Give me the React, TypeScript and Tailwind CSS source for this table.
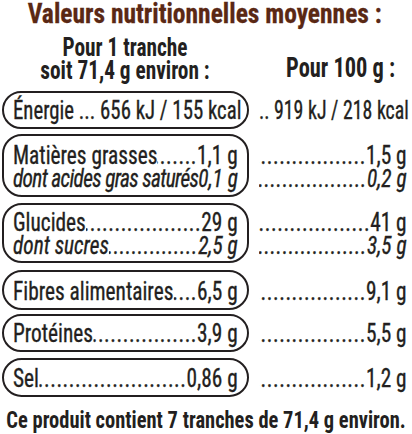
const dots = ".".repeat(60);

function Leader({
  label,
  value,
  italic,
  labelClass = "",
}: {
  label: string;
  value: string;
  italic?: boolean;
  labelClass?: string;
}) {
  return (
    <div className={`flex items-baseline whitespace-nowrap ${italic ? "italic" : ""}`}>
      <span className={`shrink-0 ${labelClass}`}>{label}</span>
      <span className="flex min-w-0 flex-1 justify-end overflow-hidden tracking-[0.7px]">
        <span className="shrink-0">{dots}</span>
      </span>
      <span className="shrink-0">{value}</span>
    </div>
  );
}

function Row({
  h,
  lh,
  pt,
  mt,
  left,
  right,
  leftScale = "w-[274px] scale-x-[0.82]",
  rightScale = "w-[180px] scale-x-[0.82]",
}: {
  h: string;
  lh: string;
  pt: string;
  mt: string;
  left: React.ReactNode;
  right: React.ReactNode;
  leftScale?: string;
  rightScale?: string;
}) {
  return (
    <div className={`grid grid-cols-[247px_153px] gap-[10px] ${h} ${mt} ${lh}`}>
      <div className={`flex flex-col justify-center rounded-[20px] border-[2.5px] border-[#231f20] pl-[8.5px] ${pt}`}>
        <div className={`origin-left ${leftScale}`}>{left}</div>
      </div>
      <div className={`flex flex-col justify-center ${pt}`}>
        <div className={`origin-left ${rightScale}`}>{right}</div>
      </div>
    </div>
  );
}

export default function App() {
  return (
    <div className="h-[434px] w-[412px] overflow-hidden bg-white pl-[2px] font-['Roboto_Condensed',sans-serif] text-[#231f20]">
      <div className="-ml-[2px] w-[450px] origin-left scale-x-[0.91] text-center text-[28px] font-bold leading-[28px] text-[#5a2814] [-webkit-text-stroke:0.3px_#5a2814]">
        Valeurs nutritionnelles moyennes :
      </div>
      <div className="mt-[7.5px] grid grid-cols-[247px_153px] gap-[10px] font-bold">
        <div className="w-[300px] origin-left scale-x-[0.82] text-center text-[26px] leading-[23.5px]">
          <div>Pour 1 tranche</div>
          <div>soit 71,4 g environ :</div>
        </div>
        <div className="pt-[17px] pl-[10px]">
          <div className="w-[179px] origin-left scale-x-[0.8] text-center text-[28px] leading-[30px]">Pour 100 g :</div>
        </div>
      </div>
      <div className="mt-[8.5px] flex flex-col text-[26px] [-webkit-text-stroke:0.35px_#231f20]">
        <Row
          h="h-[38px]"
          mt="mt-0"
          lh="leading-[26px]"
          pt="pt-0"
          leftScale="w-[282px] scale-x-[0.8]"
          rightScale="w-[194px] scale-x-[0.763]"
          left={<div className="whitespace-nowrap">Énergie ... 656 kJ / 155 kcal</div>}
          right={<div className="whitespace-nowrap text-right">.. 919 kJ / 218 kcal</div>}
        />
        <Row
          h="h-[63px]"
          mt="mt-[5px]"
          lh="leading-[23px]"
          pt="pt-[2px]"
          left={
            <>
              <Leader label="Matières grasses " value="1,1 g" />
              <Leader label="dont acides gras saturés" value="0,1 g" italic labelClass="tracking-[-0.8px]" />
            </>
          }
          right={
            <>
              <Leader label="" value="1,5 g" />
              <Leader label="" value="0,2 g" italic />
            </>
          }
        />
        <Row
          h="h-[60px]"
          mt="mt-[6px]"
          lh="leading-[23px]"
          pt="pt-[1px]"
          left={
            <>
              <Leader label="Glucides" value="29 g" />
              <Leader label="dont sucres" value="2,5 g" italic />
            </>
          }
          right={
            <>
              <Leader label="" value="41 g" />
              <Leader label="" value="3,5 g" italic />
            </>
          }
        />
        <Row
          h="h-[40px]"
          mt="mt-[7px]"
          lh="leading-[26px]"
          pt="pt-[1px]"
          left={<Leader label="Fibres alimentaires" value="6,5 g" />}
          right={<Leader label="" value="9,1 g" />}
        />
        <Row
          h="h-[38px]"
          mt="mt-[4px]"
          lh="leading-[26px]"
          pt="pt-0"
          left={<Leader label="Protéines" value="3,9 g" />}
          right={<Leader label="" value="5,5 g" />}
        />
        <Row
          h="h-[39px]"
          mt="mt-[6px]"
          lh="leading-[26px]"
          pt="pt-0"
          left={<Leader label="Sel " value="0,86 g" />}
          right={<Leader label="" value="1,2 g" />}
        />
      </div>
      <div className="-ml-[2px] mt-[11.5px] w-[463px] origin-left scale-x-[0.89] text-center text-[23px] font-bold leading-[24px] whitespace-nowrap">
        Ce produit contient 7 tranches de 71,4 g environ.
      </div>
    </div>
  );
}
